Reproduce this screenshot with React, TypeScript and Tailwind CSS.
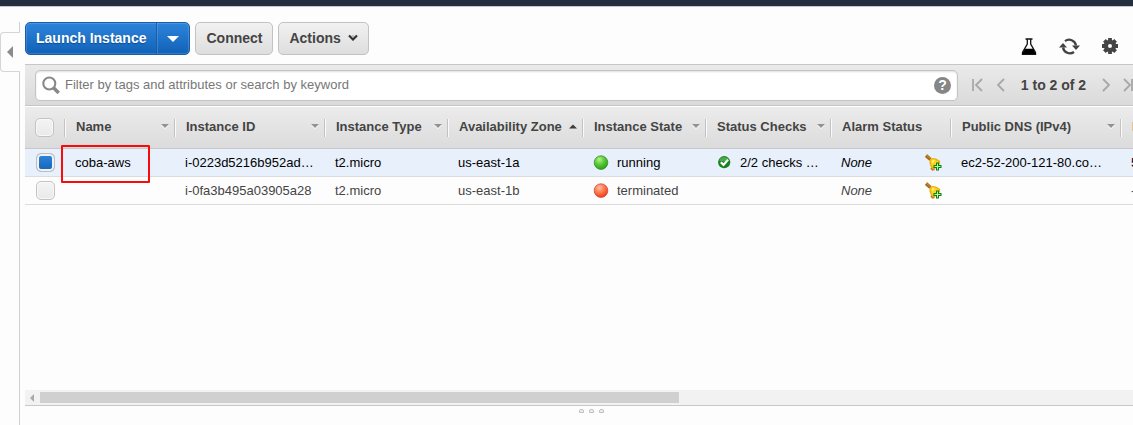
import React from "react";

type SortMark = "down" | "up" | "none";

const columns: { label: string; width: string; sort: SortMark }[] = [
  { label: "Name", width: "w-[110px]", sort: "down" },
  { label: "Instance ID", width: "w-[150px]", sort: "down" },
  { label: "Instance Type", width: "w-[123px]", sort: "down" },
  { label: "Availability Zone", width: "w-[135px]", sort: "up" },
  { label: "Instance State", width: "w-[123px]", sort: "down" },
  { label: "Status Checks", width: "w-[125px]", sort: "down" },
  { label: "Alarm Status", width: "w-[120px]", sort: "none" },
  { label: "Public DNS (IPv4)", width: "w-[170px]", sort: "down" },
  { label: "I", width: "w-[794px]", sort: "none" },
];

const instances = [
  {
    name: "coba-aws",
    id: "i-0223d5216b952ad…",
    type: "t2.micro",
    zone: "us-east-1a",
    state: "running",
    checks: "2/2 checks …",
    dns: "ec2-52-200-121-80.co…",
    ip: "5",
    selected: true,
  },
  {
    name: "",
    id: "i-0fa3b495a03905a28",
    type: "t2.micro",
    zone: "us-east-1b",
    state: "terminated",
    checks: "",
    dns: "",
    ip: "-",
    selected: false,
  },
];

function SortArrow({ mark }: { mark: SortMark }) {
  if (mark === "none") return null;
  return (
    <svg width="8" height="5" viewBox="0 0 8 5" className="shrink-0" aria-hidden="true">
      {mark === "down" ? (
        <>
          <path d="M0 1h8L4 5z" fill="#fff" />
          <path d="M0 0h8L4 4z" fill="#929292" />
        </>
      ) : (
        <path d="M0 4.500h8L4 .5z" fill="#3c3c3c" />
      )}
    </svg>
  );
}

function Check({ label, checked = false }: { label: string; checked?: boolean }) {
  return (
    <input
      type="checkbox"
      aria-label={label}
      defaultChecked={checked}
      className="block size-[19px] appearance-none rounded-[5px] border border-[#c3c3c3] bg-linear-to-b from-[#f4f4f4] to-[#e9e9e9] shadow-[inset_0_0_0_1px_#f8f8f8] checked:border-[#bdbdbd] checked:from-[#2f86dc] checked:to-[#1464bb] checked:shadow-[inset_0_0_0_2px_#f2f2f2]"
    />
  );
}

function StateBall({ running }: { running: boolean }) {
  const id = running ? "ball-running" : "ball-terminated";
  return (
    <svg width="16" height="16" viewBox="0 0 16 16" className="shrink-0" aria-hidden="true">
      <defs>
        <radialGradient id={id} cx="38%" cy="28%" r="75%">
          <stop offset="0" stopColor={running ? "#b6f08c" : "#ffc2a4"} />
          <stop offset="0.5" stopColor={running ? "#57c936" : "#ff7850"} />
          <stop offset="1" stopColor={running ? "#2f9d18" : "#e63b1c"} />
        </radialGradient>
      </defs>
      <circle cx="8" cy="7.600" r="6.800" fill={`url(#${id})`} stroke={running ? "#359329" : "#d4492b"} strokeWidth="0.8" />
    </svg>
  );
}

function CheckBall() {
  return (
    <svg width="13" height="13" viewBox="0 0 13 13" className="shrink-0" aria-hidden="true">
      <circle cx="6.200" cy="6.200" r="6.100" fill="#16821c" />
      <path d="M1.200 4.700a5.200 5.200 0 0 1 10 0c-2 1-8 1-10 0z" fill="#4aa84b" />
      <path d="M2.800 6.200l2.700 2.700L10 3.800" fill="none" stroke="#fff" strokeWidth="2.200" />
    </svg>
  );
}

function AlarmBell() {
  return (
    <svg width="17" height="17" viewBox="0 0 17 17" aria-hidden="true">
      <path d="M1 1.500l4.500 4" stroke="#a46a14" strokeWidth="3.400" />
      <path d="M1.200 1l4 3.600" stroke="#c9973c" strokeWidth="1" />
      <path d="M4.500 6.500Q5 4.300 7.500 4L11 4.500 15.200 7 15 10 9.500 15.500 6.500 14.800Q5.500 12.500 4.500 9.500z" fill="#e9b010" />
      <path d="M5.500 7Q6 5 8.500 5L14 7.500 8 13.500 6.500 11z" fill="#fbd325" />
      <path d="M7 6.300L10 6.500 7.500 9.500z" fill="#fff08a" />
      <path d="M5.800 14l1.700 2 2-.6" fill="none" stroke="#b87913" strokeWidth="1.300" />
      <path d="M11 8.500h3v2.500h2.500v3H14v2.500h-3V14H8.500v-3H11z" fill="#07820d" />
      <path d="M12 9.500h1V12h2.500v1H13v2.500h-1V13H9.500v-1H12z" fill="#b9f5ae" />
    </svg>
  );
}

function PagerIcon({ d, width, label }: { d: string; width: number; label: string }) {
  return (
    <button type="button" aria-label={label} className="shrink-0">
      <svg width={width} height="14" viewBox={`0 0 ${width} 14`} fill="none" stroke="#a8a8a8" strokeWidth="1.800">
        <path d={d} />
      </svg>
    </button>
  );
}

const greyButton =
  "h-[33px] rounded-[5px] border border-[#c2c2c2] bg-linear-to-b from-[#f1f1f1] to-[#dedede] text-sm font-bold text-[#444]";

export default function App() {
  return (
    <div className="flex min-h-screen flex-col overflow-hidden bg-[#fdfdfd] font-['Liberation_Sans',Arial,sans-serif] text-[13px] text-[#444]">
      <header className="h-[7px] shrink-0 border-b border-[#c4c8d0] bg-[#232f3e]" />
      <div className="flex flex-1">
        <aside className="flex w-5 shrink-0 flex-col pt-[15px]">
          <div className="h-[10px] border-r border-[#cfcfcf]" />
          <button
            type="button"
            aria-label="Collapse navigation"
            className="flex h-10 items-center justify-start rounded-l-[4px] border-y border-l border-[#d6d6d6] pl-[6px]"
          >
            <svg width="6" height="12" viewBox="0 0 6 12">
              <path d="M6 0v12L0 6z" fill="#8b8b8b" />
            </svg>
          </button>
          <div className="flex-1 border-r border-[#cfcfcf]" />
        </aside>

        <main className="flex min-w-0 flex-1 flex-col pl-[5px]">
          <div className="flex h-[57px] items-start justify-between pt-[15px] pr-[15px]">
            <div className="flex gap-[5px]">
              <div className="flex h-[33px] rounded-[5px] border border-[#1a5ca6] bg-linear-to-b from-[#2d84db] to-[#1062b8] text-sm font-bold text-white shadow-[inset_0_0_0_1px_rgba(255,255,255,0.15)]">
                <button type="button" className="px-[10px] pb-[2px] [text-shadow:0_1px_1px_#0d4a8d]">
                  Launch Instance
                </button>
                <button
                  type="button"
                  aria-label="More launch options"
                  className="flex w-[33px] items-center justify-center border-l border-[#1a5ca6] shadow-[inset_1px_0_0_rgba(255,255,255,0.15)]"
                >
                  <svg width="12" height="6" viewBox="0 0 12 6">
                    <path d="M0 0h12L6 6z" fill="#fff" />
                  </svg>
                </button>
              </div>
              <button type="button" className={`${greyButton} px-[10px] pb-[2px]`}>
                Connect
              </button>
              <button type="button" className={`${greyButton} flex items-center gap-[7px] px-[10px] pb-[2px]`}>
                Actions
                <svg width="10" height="7" viewBox="0 0 10 7" fill="none">
                  <path d="M1 1.500l4 4 4-4" stroke="#333" strokeWidth="2.200" />
                  <path d="M3.500 1.500h3L5 3z" fill="#999" />
                </svg>
              </button>
            </div>
            <div className="flex items-center gap-[22px] pt-4">
              <button type="button" aria-label="Experiments">
                <svg width="16" height="17" viewBox="0 0 16 17">
                  <path d="M4.500 1h7M6.300 1v5L1.500 14.500V16h13v-1.500L9.700 6V1" fill="none" stroke="#111" strokeWidth="1.300" />
                  <path d="M4 10.800h8l3.300 5.900H.7z" fill="#000" />
                </svg>
              </button>
              <button type="button" aria-label="Refresh">
                <svg width="21" height="17" viewBox="0 0 21 17" fill="none" stroke="#444" strokeWidth="2.300">
                  <path d="M6 3.100A7 7 0 0 1 17 7.500M15 14A7 7 0 0 1 4 9.500" />
                  <path d="M13 7.500h8L17 12zM0 9.500h8L4 5z" fill="#444" stroke="none" />
                </svg>
              </button>
              <button type="button" aria-label="Settings">
                <svg width="16" height="17" viewBox="0 0 16 17">
                  <g stroke="#444" strokeWidth="3.800">
                    <path d="M8 0v4M8 12v4M0 8h4M12 8h4M2.400 2.400l3 3M10.600 10.600l3 3M2.400 13.600l3-3M10.600 5.400l3-3" />
                  </g>
                  <circle cx="8" cy="8" r="4.100" fill="none" stroke="#444" strokeWidth="4.200" />
                </svg>
              </button>
            </div>
          </div>

          <div className="flex h-[42px] items-center border-y border-[#c6c6c6] bg-linear-to-b from-[#eaeaea] to-[#dadada] pl-[10px]">
            <label className="flex h-[31px] min-w-0 flex-1 items-center gap-[5px] rounded-[5px] border border-[#c4c4c4] bg-white px-[6px] shadow-[inset_0_1px_2px_#ddd]">
              <svg width="18" height="18" viewBox="0 0 18 18" fill="none" stroke="#888" className="shrink-0">
                <circle cx="7.300" cy="7.500" r="6" strokeWidth="2.100" />
                <path d="M11.500 11.700l5.200 5.200" strokeWidth="3.600" />
              </svg>
              <input
                type="text"
                aria-label="Filter instances"
                placeholder="Filter by tags and attributes or search by keyword"
                className="min-w-0 flex-1 bg-transparent outline-none placeholder:text-[#777]"
              />
              <span className="flex size-[17px] shrink-0 items-center justify-center rounded-full bg-[#868686] text-sm font-bold text-white">
                ?
              </span>
            </label>
            <nav aria-label="Pages" className="flex w-[175px] shrink-0 items-center overflow-hidden pl-[14px]">
              <PagerIcon label="First page" width={11} d="M1 1v12M10 1L4 7l6 6" />
              <div className="w-[14px] shrink-0" />
              <PagerIcon label="Previous page" width={8} d="M7 1L1 7l6 6" />
              <span className="w-[97px] shrink-0 text-center text-sm font-bold">1 to 2 of 2</span>
              <PagerIcon label="Next page" width={8} d="M1 1l6 6-6 6" />
              <div className="w-[13px] shrink-0" />
              <PagerIcon label="Last page" width={11} d="M1 1l6 6-6 6M9 1v12" />
            </nav>
          </div>

          <div className="flex-1 overflow-hidden">
            <table className="w-[1890px] table-fixed border-separate border-spacing-0 text-left">
              <thead>
                <tr className="h-[43px] bg-linear-to-b from-[#ececec] to-[#dbdbdb]">
                  <th className="w-[40px] border-t border-b border-t-white border-b-[#c8c8c8] p-0 pl-[10px]">
                    <Check label="Select all instances" />
                  </th>
                  {columns.map((column) => (
                    <th
                      key={column.label}
                      className={`${column.width} border-t border-b border-t-white border-b-[#c8c8c8] p-0 font-bold`}
                    >
                      <div className="-ml-px flex h-[18px] items-center justify-between border-l border-[#c2c2c2] pr-[6px] pb-[2px] pl-[11px] whitespace-nowrap shadow-[inset_1px_0_0_#fafafa]">
                        {column.label}
                        <SortArrow mark={column.sort} />
                      </div>
                    </th>
                  ))}
                </tr>
              </thead>
              <tbody>
                {instances.map((row) => (
                  <tr
                    key={row.id}
                    className={`h-7 whitespace-nowrap *:border-b *:border-[#dcdcdc] *:py-0 *:pr-0 ${
                      row.selected ? "bg-[#e8f0fc] text-black" : "text-[#444]"
                    }`}
                  >
                    <td className="pl-[11px]">
                      <Check label={`Select ${row.id}`} checked={row.selected} />
                    </td>
                    <td className="relative pl-[10px]">
                      {row.name}
                      {row.selected && (
                        <div className="pointer-events-none absolute -top-1 -left-1 h-[38px] w-[89px] rounded-[1px] border-2 border-[#f80b0b]" />
                      )}
                    </td>
                    <td className="pl-[10px]">{row.id}</td>
                    <td className="pl-[10px]">{row.type}</td>
                    <td className="pl-[10px]">{row.zone}</td>
                    <td className="pl-[10px]">
                      <div className="flex items-center gap-2">
                        <StateBall running={row.selected} />
                        {row.state}
                      </div>
                    </td>
                    <td className="pl-3">
                      {row.checks && (
                        <div className="flex items-center gap-[9px]">
                          <CheckBall />
                          {row.checks}
                        </div>
                      )}
                    </td>
                    <td className="pl-[10px]">
                      <div className="flex items-center justify-between pr-[9px]">
                        <em>None</em>
                        <button type="button" aria-label="Create alarm">
                          <AlarmBell />
                        </button>
                      </div>
                    </td>
                    <td className="pl-[10px]">{row.dns}</td>
                    <td className="pl-[10px]">{row.ip}</td>
                  </tr>
                ))}
              </tbody>
            </table>
          </div>

          <div className="flex h-4 items-center border-b border-[#c8c8c8] bg-[#f2f2f2] pl-[5px]">
            <svg width="4" height="8" viewBox="0 0 4 8" className="shrink-0" aria-hidden="true">
              <path d="M4 0v8L0 4z" fill="#aaa" />
            </svg>
            <div className="ml-[6px] flex-1">
              <div className="h-[11px] w-[58.5%] bg-[#d0d0d0]" />
            </div>
          </div>
          <div className="flex h-[19px] justify-center gap-[5px] pt-[3px] pl-6">
            {[0, 1, 2].map((dot) => (
              <div key={dot} className="h-1 w-[5px] rounded-t-[2px] border border-[#c2c2c2] bg-[#eee]" />
            ))}
          </div>
        </main>
      </div>
    </div>
  );
}
